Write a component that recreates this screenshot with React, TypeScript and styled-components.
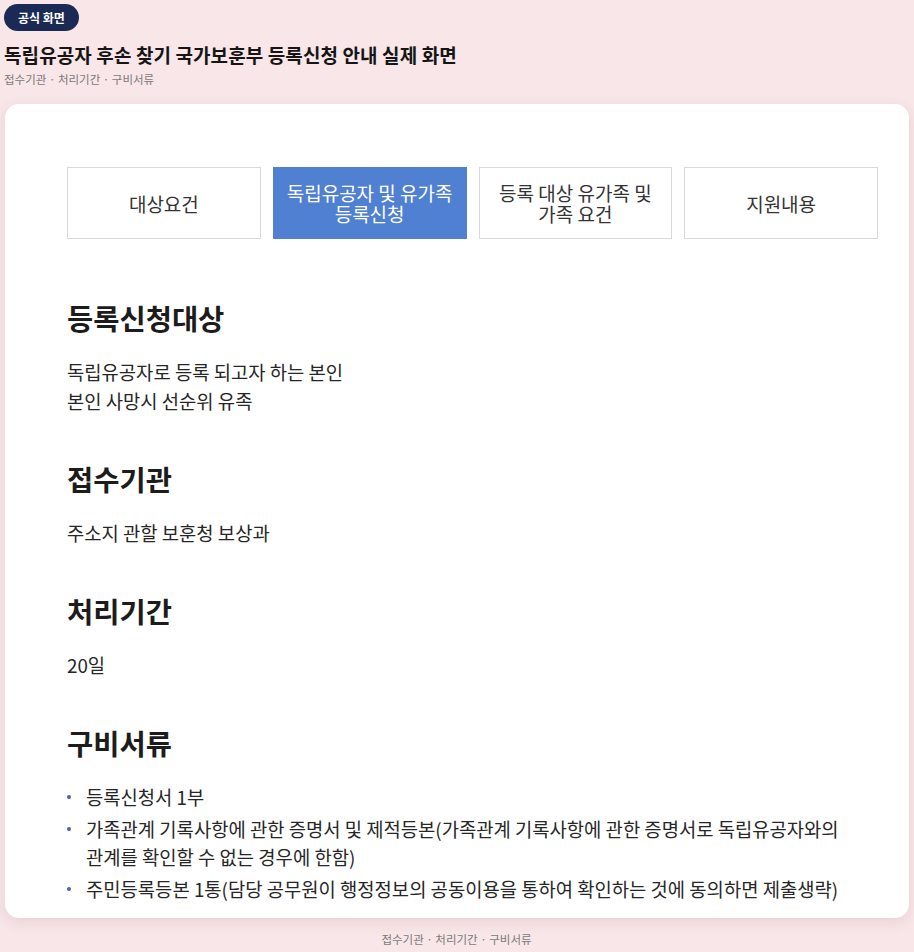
import React from "react";
import styled, { createGlobalStyle } from "styled-components";

const GlobalStyle = createGlobalStyle`
  html, body {
    margin: 0;
    padding: 0;
    background: #f8e6e8;
  }
  body {
    font-family: "Noto Sans CJK KR", "Noto Sans", sans-serif;
    color: #222;
    word-break: keep-all;
  }
  * { box-sizing: border-box; }
`;

const Page = styled.div`
  width: 914px;
  height: 952px;
  padding: 4px 5px 0 4px;
  display: flex;
  flex-direction: column;
  overflow: hidden;
`;

const Badge = styled.div`
  align-self: flex-start;
  height: 27px;
  padding: 0 14px;
  border-radius: 14px;
  background: #1a2a55;
  color: #fff;
  font-size: 12px;
  font-weight: 700;
  display: flex;
  align-items: center;
`;

const Title = styled.h1`
  margin: 12px 0 0;
  font-size: 19px;
  line-height: 24px;
  font-weight: 700;
  color: #151515;
  letter-spacing: 0.1px;
`;

const Subtitle = styled.div`
  margin-top: 4px;
  font-size: 11.5px;
  line-height: 16px;
  color: #7a7a7a;
`;

const Card = styled.div`
  margin: 17px 0 0 1px;
  height: 814px;
  background: #fff;
  border-radius: 14px;
  box-shadow: 0 4px 14px rgba(120, 60, 70, 0.12);
  padding: 63px 31px 0 62px;
  overflow: hidden;
`;

const Tabs = styled.div`
  display: grid;
  grid-template-columns: repeat(4, 1fr);
  gap: 12px;
`;

const Tab = styled.div<{ $active?: boolean }>`
  height: 72px;
  border: 1px solid ${(p) => (p.$active ? "#5080d2" : "#d9d9d9")};
  background: ${(p) => (p.$active ? "#5080d2" : "#fff")};
  color: ${(p) => (p.$active ? "#fff" : "#333")};
  font-size: 19px;
  line-height: 21px;
  text-align: center;
  display: flex;
  align-items: center;
  justify-content: center;
  padding: 0 10px;
`;

const Section = styled.section`
  margin-top: 61px;
  & + & {
    margin-top: 46px;
  }
`;

const Heading = styled.h2`
  margin: 0;
  font-size: 28.5px;
  line-height: 36px;
  font-weight: 700;
  color: #1c1c1c;
`;

const Body = styled.p`
  margin: 21px 0 0;
  font-size: 18.8px;
  line-height: 29px;
  color: #262626;
`;

const List = styled.ul`
  margin: 22px 0 0;
  padding: 0;
  list-style: none;
  display: flex;
  flex-direction: column;
  gap: 4px;
`;

const Item = styled.li`
  position: relative;
  padding-left: 19px;
  font-size: 18.8px;
  line-height: 28px;
  color: #262626;
  &::before {
    content: "";
    position: absolute;
    left: 0;
    top: 12px;
    width: 4px;
    height: 4px;
    border-radius: 50%;
    background: #4a5ccc;
  }
`;

const Footer = styled.div`
  margin-top: 13px;
  text-align: center;
  font-size: 11.5px;
  line-height: 16px;
  color: #7a7a7a;
`;

const tabs = [
  { label: "대상요건" },
  { label: "독립유공자 및 유가족 등록신청", active: true },
  { label: "등록 대상 유가족 및 가족 요건" },
  { label: "지원내용" },
];

export default function App() {
  return (
    <>
      <GlobalStyle />
      <Page>
        <Badge>공식 화면</Badge>
        <Title>독립유공자 후손 찾기 국가보훈부 등록신청 안내 실제 화면</Title>
        <Subtitle>접수기관 · 처리기간 · 구비서류</Subtitle>
        <Card>
          <Tabs>
            {tabs.map((t) => (
              <Tab key={t.label} $active={t.active}>
                {t.label}
              </Tab>
            ))}
          </Tabs>
          <Section>
            <Heading>등록신청대상</Heading>
            <Body>
              독립유공자로 등록 되고자 하는 본인
              <br />
              본인 사망시 선순위 유족
            </Body>
          </Section>
          <Section>
            <Heading>접수기관</Heading>
            <Body>주소지 관할 보훈청 보상과</Body>
          </Section>
          <Section>
            <Heading>처리기간</Heading>
            <Body>20일</Body>
          </Section>
          <Section>
            <Heading>구비서류</Heading>
            <List>
              <Item>등록신청서 1부</Item>
              <Item>
                가족관계 기록사항에 관한 증명서 및 제적등본(가족관계 기록사항에 관한 증명서로 독립유공자와의
                관계를 확인할 수 없는 경우에 한함)
              </Item>
              <Item>
                주민등록등본 1통(담당 공무원이 행정정보의 공동이용을 통하여 확인하는 것에 동의하면 제출생략)
              </Item>
            </List>
          </Section>
        </Card>
        <Footer>접수기관 · 처리기간 · 구비서류</Footer>
      </Page>
    </>
  );
}
